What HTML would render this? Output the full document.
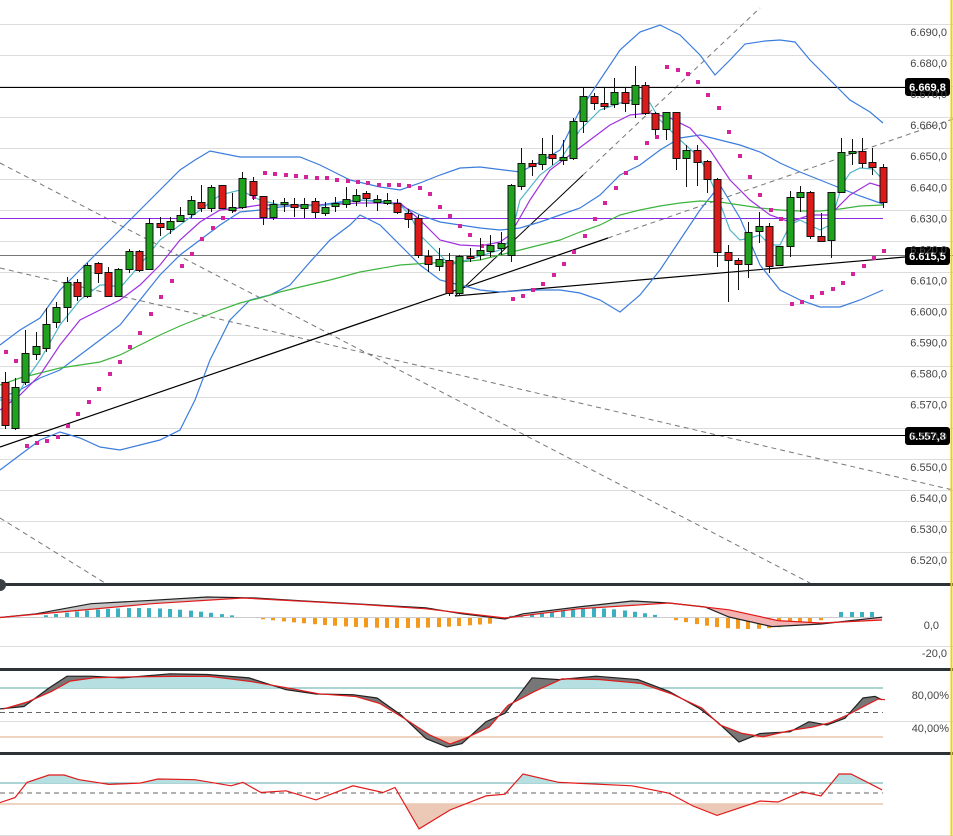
<!DOCTYPE html>
<html><head><meta charset="utf-8">
<style>
html,body{margin:0;padding:0;background:#fff;}
svg{display:block;font-family:"Liberation Sans",sans-serif;}
</style></head>
<body>
<svg id="s" width="953" height="836" viewBox="0 0 953 836" xmlns="http://www.w3.org/2000/svg">
<defs>
<clipPath id="main"><rect x="0" y="0" width="953" height="583"/></clipPath>
<clipPath id="rsiT"><rect x="0" y="753" width="953" height="30"/></clipPath>
<clipPath id="rsiO"><rect x="0" y="804" width="953" height="40"/></clipPath>
<clipPath id="stT"><rect x="0" y="670" width="953" height="18"/></clipPath>
<clipPath id="stO"><rect x="0" y="737" width="953" height="20"/></clipPath>
<clipPath id="mg"><rect x="30" y="590" width="210" height="40"/><rect x="508" y="590" width="154" height="40"/></clipPath>
</defs>
<rect width="953" height="836" fill="#fff"/>
<g id="grid" stroke="#dcdcdc" stroke-width="1"></g>
<g id="ind" clip-path="url(#main)"></g>
<g id="cdl"></g>
<g id="sub"></g>
<g id="lbl" font-size="11" fill="#444" text-anchor="end"></g>
<line x1="951.5" y1="0" x2="951.5" y2="836" stroke="#f5d000" stroke-width="2"/>
</svg>
<script>
var NS="http://www.w3.org/2000/svg";
function el(p,t,a){var e=document.createElementNS(NS,t);for(var k in a)e.setAttribute(k,a[k]);document.getElementById(p).appendChild(e);return e;}
function pl(p,pts,st,w,extra){var a={points:pts.map(function(q){return q.join(',')}).join(' '),fill:'none',stroke:st,'stroke-width':w||1};for(var k in extra)a[k]=extra[k];return el(p,'polyline',a);}
for(var i=0;i<18;i++){var y=Math.round(24+i*31.06)+0.5;el('grid','line',{x1:0,x2:953,y1:y,y2:y});}
[646.5,721.5,835.5].forEach(function(y){el('grid','line',{x1:0,x2:953,y1:y,y2:y});});
var labs=['6.690,0','6.680,0','6.670,0','6.660,0','6.650,0','6.640,0','6.630,0','6.620,0','6.610,0','6.600,0','6.590,0','6.580,0','6.570,0','6.560,0','6.550,0','6.540,0','6.530,0','6.520,0'];
labs.forEach(function(l,i){var t=el('lbl','text',{x:947,y:24+i*31.06+12});t.textContent=l;});
function lt(x,y,s){var t=el('lbl','text',{x:x,y:y});t.textContent=s;}
lt(939,629,'0,0');lt(947,657,'-20,0');lt(949,699,'80,00%');lt(949,732,'40,00%');
var I='ind';
pl(I,[[0,163],[810,583]],'#777',1,{'stroke-dasharray':'5,4'});
pl(I,[[0,268],[953,490]],'#777',1,{'stroke-dasharray':'5,4'});
pl(I,[[0,518],[105,583]],'#777',1,{'stroke-dasharray':'5,4'});
pl(I,[[583,175],[760,8]],'#777',1,{'stroke-dasharray':'5,4'});
pl(I,[[608,238],[953,119]],'#777',1,{'stroke-dasharray':'5,4'});
pl(I,[[0,87.5],[905,87.5]],'#000',1);
pl(I,[[0,435.5],[905,435.5]],'#000',1);
pl(I,[[0,218.5],[883,218.5]],'#8a2be2',1);
pl(I,[[0,255.5],[953,255.5]],'#777',1);
pl(I,[[0,447],[608,238]],'#000',1.2);
pl(I,[[455,296],[583,175]],'#000',1);
pl(I,[[455,296],[905,257]],'#000',1.2);
pl(I,[[0,345],[20,330],[40,318],[60,290],[80,270],[100,250],[120,230],[140,210],[160,190],[180,170],[195,160],[210,151],[240,157],[270,157],[300,157],[320,165],[340,175],[350,180],[380,187],[400,190],[420,183],[440,175],[460,168],[480,167],[520,172],[540,162],[560,150],[580,110],[600,80],[620,50],[640,32],[660,25],[680,35],[700,55],[715,75],[730,60],[745,44],[765,41],[780,40],[795,42],[810,60],[830,80],[850,100],[870,112],[883,123]],'#3b7ddd',1.2);
pl(I,[[0,470],[20,455],[40,440],[60,432],[80,438],[100,447],[120,450],[140,445],[160,440],[180,430],[195,400],[210,360],[230,320],[250,300],[270,295],[290,285],[310,262],[330,240],[350,225],[360,215],[380,225],[400,245],[420,265],[440,280],[460,285],[480,290],[500,292],[530,290],[560,290],[580,293],[600,300],[620,312],[640,295],[660,270],[680,240],[700,210],[720,185],[740,218],[760,265],[780,290],[800,300],[820,307],[840,307],[860,300],[883,290]],'#3b7ddd',1.2);
pl(I,[[0,398],[20,390],[40,378],[60,370],[80,355],[100,340],[120,325],[140,300],[160,275],[180,255],[200,240],[220,225],[240,212],[260,210],[280,207],[300,205],[320,205],[340,202],[360,200],[380,201],[400,205],[420,215],[440,222],[460,225],[480,228],[500,230],[520,228],[540,222],[560,215],[580,208],[600,195],[620,175],[640,165],[660,150],[680,138],[700,135],[720,140],[740,145],[760,152],[780,163],[800,172],[820,180],[840,188],[860,196],[883,204]],'#3b7ddd',1.2);
pl(I,[[0,385],[20,378],[40,373],[60,368],[80,365],[100,362],[120,355],[140,345],[160,335],[180,326],[200,318],[220,310],[240,303],[260,298],[280,292],[300,287],[330,280],[360,272],[400,265],[430,263],[460,262],[480,260],[500,255],[520,250],[540,245],[560,240],[580,232],[600,225],[620,215],[640,210],[660,206],[680,203],[700,201],[720,202],[740,205],[760,208],[780,210],[800,211],[820,211],[840,209],[860,206],[883,205]],'#3db43d',1.2);
pl(I,[[0,410],[20,395],[40,375],[60,345],[80,320],[100,310],[120,300],[140,285],[160,265],[180,240],[200,222],[220,210],[240,208],[260,205],[280,205],[300,206],[320,205],[340,204],[360,203],[380,203],[400,203],[420,220],[440,240],[460,245],[480,246],[500,242],[510,235],[530,200],[550,170],[570,155],[590,140],[610,125],[630,115],[650,113],[670,118],[690,128],[710,150],[730,180],[750,200],[770,215],[790,222],[810,215],[830,215],[850,195],[870,183],[883,187]],'#a030e0',1.2);
pl(I,[[0,400],[15,400],[26,380],[40,360],[60,325],[80,300],[100,285],[110,285],[120,288],[140,265],[160,240],[180,225],[200,210],[220,195],[240,190],[260,200],[280,205],[300,205],[320,206],[340,203],[360,200],[380,202],[400,205],[410,215],[420,235],[440,255],[450,265],[460,262],[480,256],[500,250],[510,240],[520,200],[540,175],[560,160],[580,130],[600,110],[620,103],[640,98],[650,103],[660,120],[680,140],[700,158],[715,190],[730,230],[740,240],[750,238],[760,235],[770,245],[780,245],[790,225],[800,220],[810,225],[820,230],[830,225],[842,185],[850,173],[860,168],[873,169],[883,180]],'#4fb6c8',1.2);
var sar=[[6,352],[16,361],[27,446],[37,443],[47,441],[58,437],[68,426],[78,414],[89,402],[99,389],[110,374],[120,362],[130,347],[140,333],[151,314],[161,297],[172,281],[182,266],[192,254],[202,239],[213,228],[223,218],[234,210],[244,202],[254,197],[265,173],[275,174],[286,175],[296,176],[306,177],[317,178],[327,178],[337,180],[348,181],[358,182],[368,183],[379,185],[389,185],[399,185],[409,186],[420,188],[430,194],[440,207],[450,216],[460,226],[470,235],[482,246],[513,299],[523,296],[533,290],[543,284],[554,275],[564,264],[574,252],[585,236],[595,219],[605,203],[616,188],[626,173],[636,158],[647,143],[657,137],[667,67],[678,70],[688,74],[698,82],[708,95],[719,108],[729,132],[740,156],[750,177],[760,195],[771,210],[781,219],[792,304],[802,302],[812,297],[822,293],[833,289],[843,283],[853,274],[864,266],[874,258],[884,251]];
sar.forEach(function(p){el('ind','rect',{x:p[0]-2,y:p[1]-2,width:4,height:4,fill:'#d4249c'});});
var C=[['R',382,425,372,429],['G',387,428,378,430],['G',353,382,330,385],['G',346,354,332,360],['G',324,348,308,352],['G',307,322,302,328],['G',282,307,277,322],['R',282,296,279,301],['G',265,296,263,298],['R',263,273,262,283],['R',272,296,267,297],['G',269,296,268,297],['G',251,269,249,273],['R',251,270,250,272],['G',223,269,218,270],['R',223,227,217,236],['G',221,229,217,234],['G',215,221,207,222],['G',200,214,196,218],['R',202,208,185,212],['G',187,208,185,212],['R',185,208,185,209],['G',207,210,193,213],['G',178,207,172,209],['R',181,195,177,200],['R',196,217,196,225],['G',204,217,200,220],['G',202,203,198,212],['R',204,207,198,217],['G',204,208,198,218],['R',201,212,198,218],['G',207,213,202,216],['G',203,206,197,212],['G',199,204,187,208],['G',195,201,189,206],['R',193,198,191,207],['G',199,202,195,211],['G',200,203,193,205],['R',203,212,199,214],['R',213,219,209,228],['R',218,255,215,258],['R',256,264,250,272],['G',259,266,248,271],['R',260,293,253,296],['G',256,293,255,296],['R',256,258,248,262],['G',250,255,238,260],['G',245,251,235,257],['G',243,248,232,255],['G',185,255,184,262],['G',163,186,148,190],['R',163,166,160,176],['G',154,164,138,170],['R',154,158,135,165],['G',157,160,140,165],['G',121,158,118,160],['G',96,121,88,133],['R',96,103,93,110],['R',103,106,88,110],['G',92,104,78,108],['R',92,103,88,112],['G',85,104,66,118],['R',85,113,82,115],['R',113,129,112,135],['G',112,129,112,140],['R',112,158,112,170],['G',150,158,145,187],['R',150,162,145,186],['R',161,179,160,193],['R',179,252,178,267],['R',252,260,245,302],['R',260,264,258,290],['G',232,264,222,278],['G',226,231,212,243],['R',226,266,223,273],['G',246,265,246,266],['G',197,246,191,257],['G',192,197,186,212],['R',192,236,191,239],['R',236,241,213,242],['G',192,240,192,258],['G',152,192,138,192],['G',151,153,139,165],['R',151,163,138,168],['R',162,167,148,175],['R',167,202,164,208]];
C.forEach(function(c,i){var x=Math.round(4.7+i*10.33)+0.5;
el('cdl','line',{x1:x,x2:x,y1:c[3],y2:c[4],stroke:'#111','stroke-width':1});
var h=Math.max(c[2]-c[1],2);
el('cdl','rect',{x:x-3.5,y:c[1]+0.5,width:7,height:h,fill:c[0]=='G'?'#1fa31f':'#dd1a1a',stroke:'#111','stroke-width':1});});
['583','668','752'].forEach(function(y){el('sub','rect',{x:0,y:+y,width:953,height:3,fill:'#2e3338'});});
el('sub','circle',{cx:0,cy:585,r:6,fill:'#3a3f45'});
el('sub','line',{x1:0,x2:883,y1:617.5,y2:617.5,stroke:'#ccc'});
for(var i=0;i<86;i++){var x=Math.round(4.7+i*10.33)-2;var v;
if(x>38&&x<235){v=8*Math.sin((x-38)/197*Math.PI)+1;el('sub','rect',{x:x,y:617-v,width:4,height:v,fill:'#3ab0c0'});}
else if(x>258&&x<495){v=9*Math.sin((x-258)/237*Math.PI*0.85)+1;el('sub','rect',{x:x,y:618,width:4,height:v,fill:'#f39a1e'});}
else if(x>508&&x<660){v=8*Math.sin((x-508)/152*Math.PI)+1;el('sub','rect',{x:x,y:617-v,width:4,height:v,fill:'#3ab0c0'});}
else if(x>668&&x<825){v=10*Math.sin((x-668)/157*Math.PI)+1;el('sub','rect',{x:x,y:618,width:4,height:v,fill:'#f39a1e'});}
else if(x>835&&x<880){v=5;el('sub','rect',{x:x,y:612,width:4,height:v,fill:'#3ab0c0'});}}
var mb=[[0,617.5],[36,613.8],[91,603.7],[152,600.3],[207,597],[255,598],[304,601],[365,604.4],[426,607.8],[462,613.8],[505,619],[523,613.8],[578,607],[632,601],[669,603],[705,607],[729,617],[772,626.6],[821,624],[851,620.6],[882,617.2]];
var mr=[[0,617.5],[61,612],[152,603.7],[243,598],[365,604.7],[426,608.8],[505,618],[578,608.8],[669,603],[729,609.8],[778,620.6],[821,623],[882,620]];
var poly=mb.concat(mr.slice().reverse());
function toPts(a){return a.map(function(q){return q.join(',')}).join(' ');}
el('sub','polygon',{points:toPts(poly),fill:'#f4b3b3'});
el('sub','polygon',{points:toPts(poly),fill:'#c4c4c4','clip-path':'url(#mg)'});
pl('sub',mb,'#222',1.2);pl('sub',mr,'#e21a1a',1.2);
el('sub','line',{x1:0,x2:883,y1:688,y2:688,stroke:'#5aa8a8'});
el('sub','line',{x1:0,x2:883,y1:737,y2:737,stroke:'#e0a884'});
el('sub','line',{x1:0,x2:883,y1:712.5,y2:712.5,stroke:'#666','stroke-dasharray':'5,4'});
var sk=[[0,708.9],[24,706.5],[49,688],[67,676.2],[91,676.2],[122,677.9],[170,673.8],[207,674.5],[249,677.9],[286,689.7],[316,694],[353,694.7],[377,698],[401,715],[426,738.6],[447,747],[462,743.6],[486,721.7],[505,713.3],[532,677.9],[559,679.6],[596,676.2],[638,679.6],[669,691.4],[699,708.2],[717,721.7],[739,742],[760,733.5],[790,731.8],[809,721.7],[827,725],[845,718.3],[863,698],[875,696.4],[882,699.8]];
var sd=sk.map(function(p,i){var a=sk[Math.max(0,i-1)],b=sk[Math.min(sk.length-1,i+1)];return [p[0]+3,(a[1]+p[1]+b[1])/3+1];});
el('sub','polygon',{points:toPts(sk.concat([[882,688],[0,688]])),fill:'#b5dfe0','clip-path':'url(#stT)'});
el('sub','polygon',{points:toPts(sk.concat([[882,737],[0,737]])),fill:'#ecc9b6','clip-path':'url(#stO)'});
el('sub','polygon',{points:toPts(sk.concat(sd.slice().reverse())),fill:'#777'});
pl('sub',sk,'#222',1.2);pl('sub',sd,'#e21a1a',1.2);
el('sub','line',{x1:0,x2:883,y1:783,y2:783,stroke:'#5aa8a8'});
el('sub','line',{x1:0,x2:883,y1:804,y2:804,stroke:'#e0a884'});
el('sub','line',{x1:0,x2:883,y1:793,y2:793,stroke:'#666','stroke-dasharray':'5,4'});
var rs=[[0,802.6],[15,797.6],[27,782.4],[49,775],[64,775],[79,779.7],[109,784.4],[140,783.1],[158,779],[195,779.7],[231,785.8],[243,782.4],[261,792.5],[286,790.8],[316,799.9],[353,785.8],[383,792.5],[395,787.5],[419,828.9],[450,810],[486,795.9],[505,794.2],[523,774],[559,782.4],[632,785.8],[669,793.2],[693,806],[717,815.4],[760,801],[778,802],[802,791.8],[821,795.9],[839,774],[851,774],[882,789.8]];
el('sub','polygon',{points:toPts(rs.concat([[882,783],[0,783]])),fill:'#b5dfe0','clip-path':'url(#rsiT)'});
el('sub','polygon',{points:toPts(rs.concat([[882,804],[0,804]])),fill:'#ecc9b6','clip-path':'url(#rsiO)'});
pl('sub',rs,'#e21a1a',1.2);
[[78,'6.669,8'],[247,'6.615,5'],[427,'6.557,8']].forEach(function(b){
el('sub','rect',{x:905,y:b[0],width:45,height:18,rx:3,fill:'#000'});
var t=el('sub','text',{x:927.5,y:b[0]+13,'font-size':'11','font-weight':'bold',fill:'#fff','text-anchor':'middle'});t.textContent=b[1];});
</script>
</body></html>
